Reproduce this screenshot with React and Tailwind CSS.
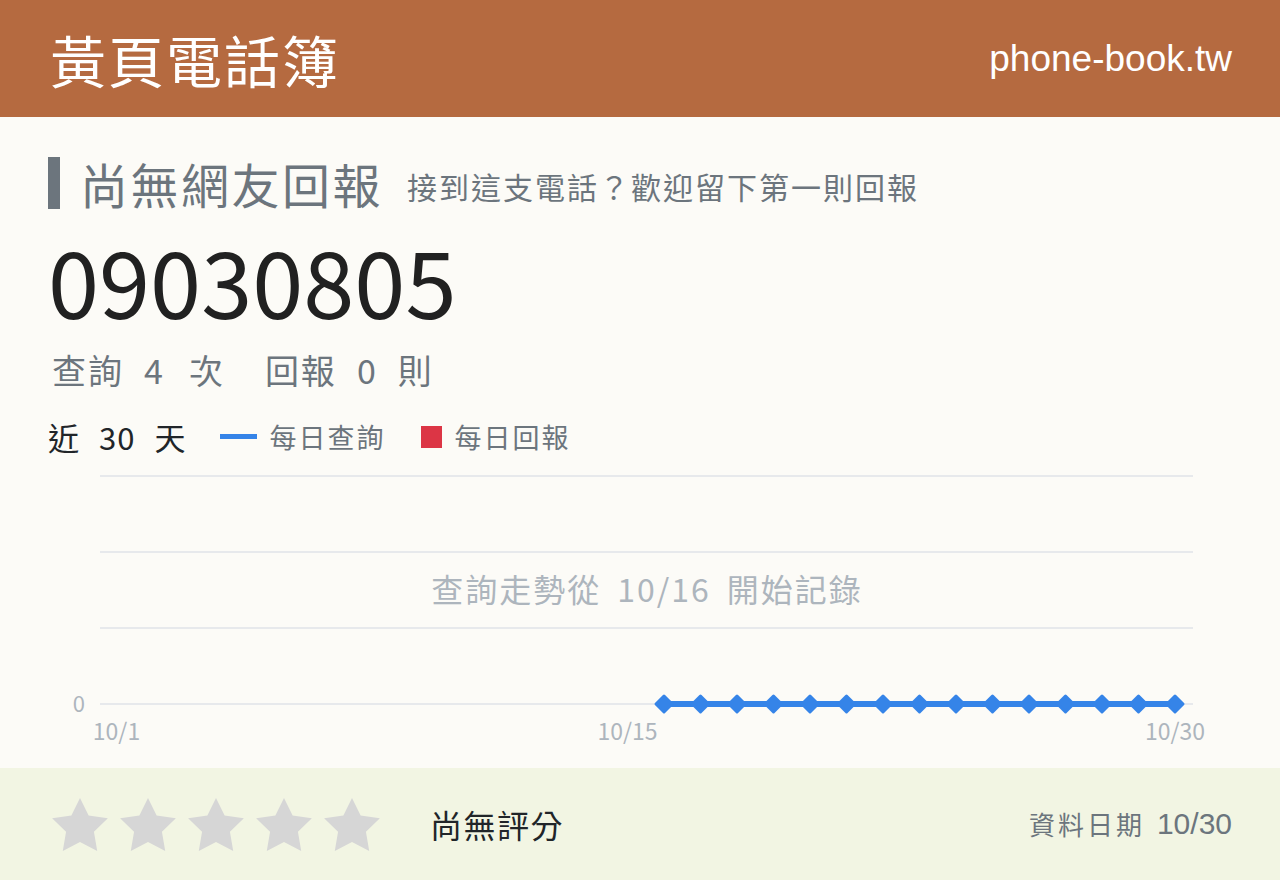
const days = Array.from({ length: 30 }, (_, i) => i + 1);
const dayX = (d) => 68.5 + (d - 1) * 36.5;
const tracked = days.filter((d) => d >= 16);

function Star() {
  return (
    <svg width="56" height="53" viewBox="2 2 20 19.02" className="shrink-0">
      <polygon
        points="12,2 15.09,8.26 22,9.27 17,14.14 18.18,21.02 12,17.77 5.82,21.02 7,14.14 2,9.27 8.91,8.26"
        fill="#d6d6d6"
      />
    </svg>
  );
}

function TrendChart() {
  const grid = [16, 92, 168, 244];
  return (
    <div className="relative">
      <svg width="1184" height="300" viewBox="0 0 1184 300" className="block">
        {grid.map((y) => (
          <line key={y} x1="52" x2="1145" y1={y} y2={y} stroke="#e7e9ec" strokeWidth="2" />
        ))}
        <text x="37" y="252" textAnchor="end" fontSize="22" fill="#adb5bd" fontFamily="'Noto Sans CJK TC', sans-serif">
          0
        </text>
        {[1, 15, 30].map((d) => (
          <text
            key={d}
            x={dayX(d)}
            y="280"
            textAnchor="middle"
            fontSize="23"
            fill="#adb5bd"
            fontFamily="'Noto Sans CJK TC', sans-serif"
          >
            10/{d}
          </text>
        ))}
        <polyline
          points={tracked.map((d) => `${dayX(d)},244`).join(' ')}
          fill="none"
          stroke="#3584e8"
          strokeWidth="6"
        />
        {tracked.map((d) => (
          <polygon
            key={d}
            points={`${dayX(d) - 8},244 ${dayX(d)},236 ${dayX(d) + 8},244 ${dayX(d)},252`}
            fill="#3584e8"
            stroke="#3584e8"
            strokeWidth="3"
            strokeLinejoin="round"
          />
        ))}
      </svg>
      {/* empty-state note sits over the plot area (offset by the y-axis gutter) */}
      <div className="absolute left-[14px] right-0 top-[112px] flex justify-center items-center text-[32px] leading-none tracking-[2px] text-[#adb5bd]">
        <span>查詢走勢從</span>
        <span className="ml-4">10/16</span>
        <span className="ml-4">開始記錄</span>
      </div>
    </div>
  );
}

export default function App() {
  return (
    <div className="w-[1280px] h-[880px] flex flex-col bg-[#fcfbf7] font-['Noto_Sans_CJK_TC',sans-serif]">
      {/* Header */}
      <header className="h-[117px] shrink-0 bg-[#b56a40] px-12 flex items-center justify-between text-white">
        <h1 className="text-[56px] leading-none tracking-[2px] ml-0.5">黃頁電話簿</h1>
        <span className="text-[37px] leading-none font-['Liberation_Sans',sans-serif]">phone-book.tw</span>
      </header>

      <main className="flex-1 px-12 pt-10">
        <section className="flex items-center h-[52px]">
          <div className="w-3 h-[52px] bg-[#6c757d]" />
          <h2 className="ml-5 text-[48px] leading-none tracking-[2.5px] text-[#6c757d]">尚無網友回報</h2>
          <p className="ml-6 pt-1.5 text-[30px] leading-none tracking-[2px] text-[#6c757d]">
            接到這支電話？歡迎留下第一則回報
          </p>
        </section>

        <div className="mt-6 text-[92px] leading-none text-[#212121]">09030805</div>

        <div className="mt-7 flex items-center text-[34px] leading-none tracking-[2px] text-[#6c757d] ml-1">
          <span>查詢</span>
          <span className="ml-5">4</span>
          <span className="ml-6">次</span>
          <span className="ml-10">回報</span>
          <span className="ml-5">0</span>
          <span className="ml-5">則</span>
        </div>

        <div className="mt-[34px] flex items-center">
          <div className="flex items-center text-[31px] leading-none tracking-[1px] text-[#212529]">
            <span>近</span>
            <span className="ml-[19px]">30</span>
            <span className="ml-[19px]">天</span>
          </div>
          <div className="ml-[34px] w-[37px] h-[5px] bg-[#3584e8]" />
          <span className="ml-3 text-[27px] leading-none tracking-[2px] text-[#6c757d]">每日查詢</span>
          <div className="ml-9 w-[21px] h-[22px] bg-[#dc3545]" />
          <span className="ml-3 text-[27px] leading-none tracking-[2px] text-[#6c757d]">每日回報</span>
        </div>

        <div className="mt-2">
          <TrendChart />
        </div>
      </main>

      {/* Footer: rating + data date */}
      <footer className="h-[112px] shrink-0 bg-[#f2f5e3] px-[52px] pr-12 flex items-center">
        <div className="flex items-center gap-3">
          <Star />
          <Star />
          <Star />
          <Star />
          <Star />
        </div>
        <span className="ml-[50px] text-[32px] leading-none tracking-[1.5px] text-[#212529]">尚無評分</span>
        <div className="ml-auto flex items-center text-[#6c757d]">
          <span className="text-[26px] leading-none tracking-[3px]">資料日期</span>
          <span className="ml-3 text-[30px] leading-none font-['Liberation_Sans',sans-serif]">10/30</span>
        </div>
      </footer>
    </div>
  );
}
